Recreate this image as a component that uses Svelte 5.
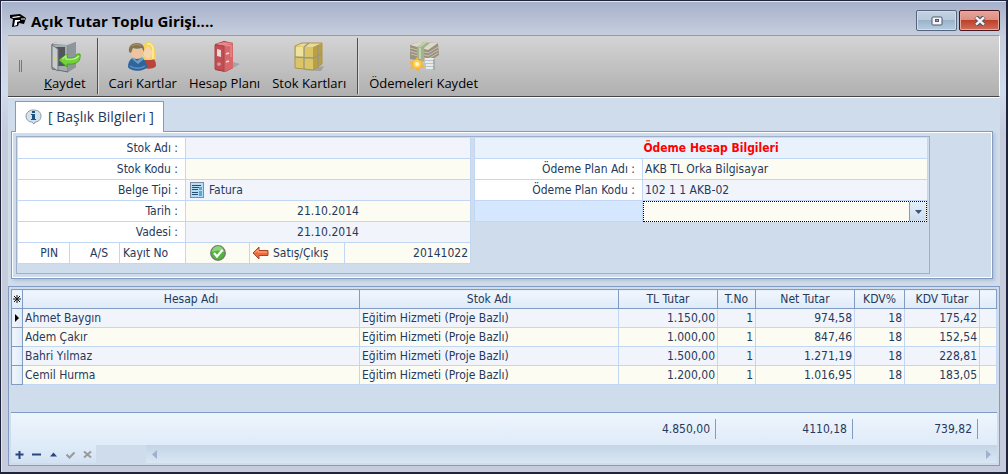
<script>
/**
 * Açık Tutar Toplu Girişi — bulk open amount entry window.
 */
const tools = [
	{ id: 'save', label: 'Kaydet', accessKey: true, divider: true },
	{ id: 'people', label: 'Cari Kartlar' },
	{ id: 'binder', label: 'Hesap Planı' },
	{ id: 'box', label: 'Stok Kartları', divider: true },
	{ id: 'money', label: 'Ödemeleri Kaydet' },
];

const columns = [
	{ key: 'account', label: 'Hesap Adı' },
	{ key: 'stock', label: 'Stok Adı' },
	{ key: 'amount', label: 'TL Tutar', numeric: true },
	{ key: 'no', label: 'T.No', numeric: true },
	{ key: 'net', label: 'Net Tutar', numeric: true },
	{ key: 'rate', label: 'KDV%', numeric: true },
	{ key: 'vat', label: 'KDV Tutar', numeric: true },
];

const stock = 'Eğitim Hizmeti (Proje Bazlı)';
const rows = [
	{ account: 'Ahmet Baygın', stock, amount: '1.150,00', no: '1', net: '974,58', rate: '18', vat: '175,42' },
	{ account: 'Adem Çakır', stock, amount: '1.000,00', no: '1', net: '847,46', rate: '18', vat: '152,54' },
	{ account: 'Bahri Yılmaz', stock, amount: '1.500,00', no: '1', net: '1.271,19', rate: '18', vat: '228,81' },
	{ account: 'Cemil Hurma', stock, amount: '1.200,00', no: '1', net: '1.016,95', rate: '18', vat: '183,05' },
];

let selected = $state(0);
let form = $state({
	stockName: '',
	stockCode: '',
	docType: 'Fatura',
	date: '21.10.2014',
	due: '21.10.2014',
	direction: 'Satış/Çıkış',
	recordNo: '20141022',
	planName: 'AKB TL Orka Bilgisayar',
	planCode: '102 1 1 AKB-02',
	extra: '',
});
</script>

<div class="window">
	<header class="titlebar">
		<svg class="app-icon" width="16" height="14" viewBox="0 0 16 14" aria-hidden="true">
			<path d="M0 1l10-1 6 4-2 6-5-1-1 3-6 1 1-8-3-1z" fill="#000" />
			<path d="M2 3l7-1 2 1-8 1zM5 6l5 0v1l-3 1v3l-3 1z" fill="#fff" />
			<path d="M11 5l4 0" stroke="#fff" />
		</svg>
		<h1>Açık Tutar Toplu Girişi....</h1>
		<button class="caption" aria-label="Ekranı kapla">
			<svg width="12" height="10" viewBox="0 0 12 10">
				<rect x="1" y="1" width="10" height="8" rx="1" fill="#f4f6fa" stroke="#4d566b" />
				<rect x="4.5" y="3.5" width="3" height="2" fill="#8fa6c0" stroke="#4d566b" />
			</svg>
		</button>
		<button class="caption caption--close" aria-label="Kapat">
			<svg width="12" height="10" viewBox="0 0 12 10">
				<path d="M2 1l8 8M10 1l-8 8" stroke="#4c4d60" stroke-width="4.4" />
				<path d="M2 1.400l8 7.200M10 1.400L2 8.600" stroke="#f4f4f6" stroke-width="2.600" />
			</svg>
		</button>
	</header>

	<div class="toolbar" role="toolbar" aria-label="Araçlar">
		<span class="grip"></span>
		{#each tools as tool (tool.id)}
			<button class="tool">
				<svg width="32" height="32" viewBox="0 0 32 32" aria-hidden="true">
					{#if tool.id === 'save'}
						<path d="M3 3l5-2h19v25l-8 5-16-3z" fill="#80878c" />
						<path d="M3 3h16v28l-16-3z" fill="#a5acb0" stroke="#666d71" />
						<path d="M3 3l5-2h19l-8 3z" fill="#cbd0d3" />
						<path d="M19 4l8-3v25l-8 5z" fill="#8f969b" />
						<path d="M7 6h9v19H7z" fill="#50565a" />
						<path d="M3 4l6 4v22l-6-4z" fill="#c6cbce" stroke="#70777b" />
						<circle cx="6" cy="18" r="1.3" fill="#f2d14a" />
						<path d="M10 19l8-6v4c6 1 9-1 10-4h3c1 7-3 11-13 10v3z" fill="#73d33b" stroke="#46a51e" />
						<path d="M13 18l4-3v3c6 1 10 0 13-3" fill="none" stroke="#b5f08b" stroke-width="1.4" />
					{:else if tool.id === 'people'}
						<path d="M16 26c0-7 2-10 6-10 5 0 7 4 7 9-2 3-9 4-13 1z" fill="#b8443c" />
						<path d="M15 9c0-5 3-8 6-8 5 0 7 4 7 9l1 8-5 1h-8z" fill="#f3d45c" />
						<path d="M17 9l4-4 4 5c0 4-1 7-4 8l-4-3z" fill="#f7d4b0" />
						<path d="M20 3c4-1 6 2 6 6v9" stroke="#ffee9f" stroke-width="1.500" fill="none" />
						<path d="M1 26c0-7 4-10 9-10 6 0 10 4 10 10-3 5-16 5-19 0z" fill="#2f659b" />
						<path d="M6 16l4 4 5-4 2 2-6 5-6-5z" fill="#6f9fc9" />
						<path d="M4 8h12c0 7-2 10-6 10S4 15 4 8z" fill="#edc49e" />
						<path d="M2 11C1 5 5 2 10 2c5 0 8 3 7 9l-2-4c-4 1-7 1-9 0l-2 5z" fill="#8a7350" />
						<path d="M5 5c3-2 7-2 9 0" stroke="#af9871" fill="none" />
						<path d="M3 25c4 3 11 3 15 0" stroke="#5c92c2" stroke-width="1.500" fill="none" />
					{:else if tool.id === 'binder'}
						<path d="M17 31l14-8-7-2z" fill="#6b6b6b" opacity=".35" />
						<path d="M6 3l9-3 9 2v25l-8 4-10-2z" fill="#a92e35" />
						<path d="M14 5l10-3v25l-9 4z" fill="#d8676a" />
						<path d="M6 3l9-2 9 1-9 3z" fill="#e7898b" />
						<path d="M6 4l9 1v25l-9-2z" fill="#c14e52" stroke="#a9444a" />
						<path d="M8 8l4 1v7l-4-1z" fill="#f0d6d0" />
						<circle cx="10" cy="23" r="1.600" fill="#f1dddd" />
						<circle cx="10" cy="23" r=".7" fill="#8c2228" />
						<path d="M17 13l3-1M17 21l3-1" stroke="#f4dada" stroke-width="1.6" />
						<path d="M17 5l5-1v12" stroke="#e89a9a" fill="none" />
					{:else if tool.id === 'box'}
						<path d="M10 29l18 1 3-5z" fill="#555" opacity=".3" />
						<path d="M2 5l7-3h20v21l-9 6-18-2z" fill="#b19836" />
						<path d="M2 5h18v24L2 27z" fill="#dac666" />
						<path d="M20 6l9-4v21l-9 6z" fill="#b9a042" />
						<path d="M2 5l7-3h20l-9 4z" fill="#e9dc99" />
						<path d="M3 6h8v10H3z" fill="#efe29a" />
						<path d="M11 6v22M2 16l18 1 9-4M16 2l-5 4M25 4v22" stroke="#9a9585" stroke-width="1.300" fill="none" />
						<path d="M2 5l7-3h20v21l-9 6-18-2z" fill="none" stroke="#a9964c" />
					{:else}
						<path d="M2 4l8-3 20 1 1 12-11 7-18-3z" fill="#9a917f" />
						<path d="M2 4l8-3 20 1-10 7z" fill="#ddd8cb" />
						<path d="M2 7l18 5 10-6M2 10l18 5 10-6M3 13l17 5 10-6" stroke="#c9c1b0" fill="none" />
						<path d="M9 6l7-5 6 1-6 5v13l-7-2z" fill="#9fb48d" />
						<path d="M11 6l7-5M12 7v11" stroke="#c3d2b1" stroke-width="2" fill="none" />
						<path d="M16 17h11v12c-3 2-8 2-11 0z" fill="#bec4c4" />
						<path d="M17 18h9M17 21h8M18 24h8M18 27h7" stroke="#f7f9f9" stroke-width="1.6" />
						<path d="M26 18v11" stroke="#8d9496" />
						<path d="M9 16l2 4 4-1-1 4 3 3-5 1-2 4-3-4-5 1 2-4-3-3 5-1z" fill="#fbb333" />
						<circle cx="9" cy="23" r="4" fill="#ffd14e" />
						<circle cx="9" cy="23" r="2" fill="#fffbd0" />
					{/if}
				</svg>
				<span>
					{#if tool.accessKey}<u>{tool.label[0]}</u>{tool.label.slice(1)}{:else}{tool.label}{/if}
				</span>
			</button>
			{#if tool.divider}
				<span class="divider"></span>
			{/if}
		{/each}
	</div>

	<main>
		<div class="tabs" role="tablist">
			<button class="tab" role="tab" aria-selected="true">
				<svg width="17" height="16" viewBox="0 0 17 16" aria-hidden="true">
					<path d="M8 1c5 0 8 2 8 6s-3 6-6 6l-1 2-2-2c-4 0-6-3-6-6s3-6 7-6z" fill="#d5e2ec" stroke="#8798a6" />
					<path d="M7 2h3v2H7zM6 5h4v5h1v1H6v-1h1V6H6z" fill="#1c5383" />
				</svg>
				<span>[ Başlık Bilgileri ]</span>
			</button>
		</div>

		<section class="panel">
			<div class="sheet">
				<div class="fields">
					<label class="name" for="stock-name">Stok Adı :</label>
					<div class="value"><input id="stock-name" bind:value={form.stockName} /></div>
					<label class="name" for="stock-code">Stok Kodu :</label>
					<div class="value value--alt"><input id="stock-code" bind:value={form.stockCode} /></div>
					<label class="name" for="doc-type">Belge Tipi :</label>
					<div class="value value--icon">
						<svg width="14" height="16" viewBox="0 0 14 16" aria-hidden="true">
							<rect x=".5" y=".5" width="13" height="15" fill="#b5dcf5" stroke="#7e8d99" />
							<path d="M2 3.500h9M2 5.500h7M2 7.500h6M2 10.500h6M2 12.500h6" stroke="#254f72" />
							<path d="M9 5h3v3H9zM9 9h3v5H9z" fill="#5ca5d6" />
						</svg>
						<input id="doc-type" bind:value={form.docType} />
					</div>
					<label class="name" for="date">Tarih :</label>
					<div class="value value--alt"><input id="date" class="center" bind:value={form.date} /></div>
					<label class="name" for="due">Vadesi :</label>
					<div class="value"><input id="due" class="center" bind:value={form.due} /></div>

					<div class="record-names">
						<span>PIN</span>
						<span>A/S</span>
						<label for="record-no">Kayıt No</label>
					</div>
					<div class="record-values">
						<div class="state">
							<svg width="16" height="16" viewBox="0 0 16 16" role="img" aria-label="Onaylı">
								<circle cx="8" cy="8" r="7.200" fill="#52b53c" stroke="#6e7d6b" stroke-width="1.400" />
								<path d="M2 7a6 6 0 0112 0c-4-2-8-2-12 0z" fill="#8bd679" />
								<path d="M4 8l3 3.500L12.500 5" stroke="#fff" stroke-width="2.200" fill="none" />
							</svg>
						</div>
						<div class="value value--direction">
							<svg width="17" height="14" viewBox="0 0 17 14" aria-hidden="true">
								<path d="M1 7l6-6v3.500h9v5H7V13z" fill="#ef6a3a" stroke="#a8452b" />
								<path d="M3 6.500l3-3V6h9" stroke="#ffb38f" fill="none" />
							</svg>
							<input aria-label="Satış/Çıkış" bind:value={form.direction} />
						</div>
						<div class="value value--alt"><input id="record-no" class="right" bind:value={form.recordNo} /></div>
					</div>
				</div>

				<div class="fields">
					<h2>Ödeme Hesap Bilgileri</h2>
					<label class="name" for="plan-name">Ödeme Plan Adı :</label>
					<div class="value value--alt"><input id="plan-name" bind:value={form.planName} /></div>
					<label class="name" for="plan-code">Ödeme Plan Kodu :</label>
					<div class="value"><input id="plan-code" bind:value={form.planCode} /></div>
					<label class="name name--active" for="extra" aria-label="Ek hesap"></label>
					<div class="combo">
						<select id="extra" bind:value={form.extra}>
							<option value=""></option>
						</select>
						<span class="combo-arrow">
							<svg width="7" height="4" viewBox="0 0 7 4"><path d="M0 0h7L3.500 4z" fill="#3f5373" /></svg>
						</span>
					</div>
				</div>
			</div>
		</section>

		<section class="grid">
			<table>
				<colgroup>
					<col class="col-mark" />
					{#each columns as column (column.key)}
						<col class="col-{column.key}" />
					{/each}
					<col class="col-rest" />
				</colgroup>
				<thead>
					<tr>
						<th aria-label="Satır">
							<svg width="8" height="8" viewBox="0 0 8 8">
								<path d="M4 0v8M0 4h8M1 1l6 6M7 1L1 7" stroke="#111" />
							</svg>
						</th>
						{#each columns as column (column.key)}
							<th>{column.label}</th>
						{/each}
						<th></th>
					</tr>
				</thead>
				<tbody>
					{#each rows as row, i (row.account)}
						<tr onclick={() => (selected = i)}>
							<td class="mark">
								{#if selected === i}
									<svg width="4" height="8" viewBox="0 0 4 8"><path d="M0 0l4 4-4 4z" /></svg>
								{/if}
							</td>
							{#each columns as column (column.key)}
								<td class:numeric={column.numeric}>{row[column.key]}</td>
							{/each}
							<td></td>
						</tr>
					{/each}
				</tbody>
			</table>

			<div class="totals">
				<output class="total-amount">4.850,00</output>
				<output class="total-net">4110,18</output>
				<output class="total-vat">739,82</output>
			</div>

			<footer class="navigator">
				<div class="nav-buttons">
					<button aria-label="Ekle"><svg width="9" height="9" viewBox="0 0 9 9"><path d="M4.500 1v8M.5 4.500h8" stroke="#27467f" stroke-width="2" /></svg></button>
					<button aria-label="Sil"><svg width="9" height="9" viewBox="0 0 9 9"><path d="M0 4.500h9" stroke="#27467f" stroke-width="2" /></svg></button>
					<button aria-label="Düzenle"><svg width="9" height="9" viewBox="0 0 9 9"><path d="M1 6.500l3.500-4 3.500 4z" fill="#27467f" /></svg></button>
					<button aria-label="Onayla" disabled><svg width="9" height="9" viewBox="0 0 9 9"><path d="M.5 4.500l3 3 5-5" stroke="#999" stroke-width="2" fill="none" /></svg></button>
					<button aria-label="Vazgeç" disabled><svg width="9" height="9" viewBox="0 0 9 9"><path d="M1 1.500l7 6M8 1.500l-7 6" stroke="#999" stroke-width="2" /></svg></button>
				</div>
				<div class="scrollbar">
					<button aria-label="Sola kaydır"><svg width="5" height="9" viewBox="0 0 5 9"><path d="M5 0v9L0 4.500z" fill="#9fb1cb" /></svg></button>
					<button aria-label="Sağa kaydır"><svg width="5" height="9" viewBox="0 0 5 9"><path d="M0 0v9l5-4.500z" fill="#9fb1cb" /></svg></button>
				</div>
			</footer>
		</section>
	</main>
</div>

<style>
	:global(body) {
		background: #c6ccdb;
	}

	.window {
		--line: #829bc0;
		--soft-line: #c1d7f3;
		--base: #cfdcec;
		--cell: #f1f5fb;
		--cell-alt: #fcfcf3;
		--ink: #26395c;
		border: 1px solid #20243a;
		border-width: 1px 2px 2px 1px;
		padding: 0 6px 6px 7px;
		background: linear-gradient(#a5b0ca, #c6cedd 34px, #d0dcec 90px, #c6ccdb 130px);
		box-shadow: inset 1px 1px #dce5f2;
		font: 12px/18px 'DejaVu Sans Condensed', 'Noto Sans', sans-serif;
		color: var(--ink);
	}

	button,
	input,
	select {
		font: inherit;
		color: inherit;
		margin: 0;
		padding: 0;
		border: 0;
		background: none;
	}

	svg {
		display: block;
		flex-shrink: 0;
	}

	.titlebar {
		display: flex;
		align-items: center;
		gap: 2px;
		height: 34px;
		padding: 5px 0 0 2px;
		box-sizing: border-box;
	}

	h1 {
		flex: 1;
		margin: 0;
		padding-left: 3px;
		font: bold 15px/20px 'Open Sans', sans-serif;
		color: #000;
		white-space: nowrap;
	}

	.caption {
		display: grid;
		place-items: center;
		width: 41px;
		height: 21px;
		border: 1px solid #56657e;
		border-radius: 2px;
		background: linear-gradient(#c4d1e1, #b8c9db 50%, #9bb3ca 50%, #b6cde0);
		box-shadow: inset 0 0 0 1px #d2deeb;
	}

	.caption--close {
		border-color: #4b1522;
		background: linear-gradient(#e8a49a, #dc8c80 50%, #bd4029 50%, #d0705b);
		box-shadow: inset 0 0 0 1px #e5a99d;
	}

	.toolbar {
		display: flex;
		align-items: center;
		height: 60px;
		padding-left: 11px;
		border-top: 1px solid #979aa0;
		border-right: 1px solid #fff;
		border-bottom: 1px solid #444;
		background: linear-gradient(#d4d4d4, #b0b0b0);
		color: #000;
		font: 13px/18px 'Open Sans', sans-serif;
	}

	.grip {
		width: 1px;
		height: 12px;
		margin-right: 16px;
		border: 1px solid #777;
		border-width: 0 1px;
	}

	.tool {
		display: flex;
		flex-direction: column;
		align-items: center;
		gap: 1px;
		padding: 0 6px;
		white-space: nowrap;
	}

	.divider {
		width: 1px;
		height: 56px;
		margin: 0 5px;
		background: #4e4e4e;
		box-shadow: 1px 0 #dadada;
	}

	main {
		background: var(--base);
		border-top: 1px solid #fff;
	}

	.tabs {
		display: flex;
		padding: 3px 7px 0;
	}

	.tab {
		display: flex;
		align-items: center;
		gap: 6px;
		height: 31px;
		padding: 0 9px;
		margin-bottom: -1px;
		border: 1px solid var(--line);
		border-bottom: 0;
		background: #fff;
		font: 14px/20px 'Open Sans', sans-serif;
		z-index: 1;
	}

	.panel {
		margin: 0 7px 7px 3px;
		border: 1px solid var(--line);
		padding: 4px;
		box-shadow: inset 0 0 0 1px #fff, 2px 2px 3px #b4c2d6;
	}

	.sheet {
		display: flex;
		gap: 3px;
		align-items: flex-start;
		margin-right: 58px;
		padding: 1px 1px 9px;
		border: 1px solid #9dafcb;
	}

	.fields {
		flex: 1 1 0;
		min-width: 0;
		display: grid;
		grid-template-columns: 168px 1fr;
		grid-auto-rows: 21px;
		border-right: 1px solid var(--soft-line);
	}

	.fields + .fields {
		border-left: 1px solid var(--soft-line);
	}

	.name {
		padding: 1px 7px 0 0;
		border-right: 1px solid var(--soft-line);
		border-bottom: 1px solid var(--soft-line);
		background: #fff;
		text-align: right;
	}

	.name--active {
		background: #d5e7fe;
	}

	h2 {
		grid-column: 1 / -1;
		margin: 0;
		padding: 1px 0 0 20px;
		border-bottom: 1px solid var(--soft-line);
		background: #e9f2fc;
		font: inherit;
		font-weight: bold;
		color: #f00;
		text-align: center;
	}

	.value {
		display: flex;
		align-items: center;
		gap: 5px;
		min-width: 0;
		padding: 0 2px;
		border-bottom: 1px solid var(--soft-line);
		background: var(--cell);
	}

	.value--alt,
	.value--direction {
		background: var(--cell-alt);
	}

	.value--icon {
		padding-left: 4px;
	}

	.value input {
		flex: 1;
		width: 0;
		min-width: 0;
	}

	.value .center {
		text-align: center;
	}

	.value .right {
		text-align: right;
	}

	.record-names {
		display: grid;
		grid-template-columns: 52px 50px 1fr;
		background: #fff;
		border-right: 1px solid var(--soft-line);
		border-bottom: 1px solid var(--soft-line);
	}

	.record-names > * {
		padding: 1px 3px 0;
	}

	.record-names span {
		border-right: 1px solid var(--soft-line);
		padding-right: 11px;
		text-align: right;
	}

	.record-values {
		display: grid;
		grid-template-columns: 64px 95px 1fr;
	}

	.state {
		display: grid;
		place-items: center;
		border-right: 1px solid var(--soft-line);
		border-bottom: 1px solid var(--soft-line);
		background: var(--cell-alt);
	}

	.value--direction {
		gap: 4px;
		border-right: 1px solid var(--soft-line);
	}

	.combo {
		display: flex;
		border: 1px dotted #000;
		background: var(--cell-alt);
	}

	.combo select {
		flex: 1;
		appearance: none;
		outline: 0;
	}

	.combo-arrow {
		display: grid;
		place-items: center;
		width: 16px;
		border-left: 1px solid var(--line);
		background: linear-gradient(#e4eefa, #ccdcee);
		pointer-events: none;
	}

	.grid {
		border: 1px solid var(--line);
		padding: 2px;
	}

	table {
		width: 100%;
		table-layout: fixed;
		border-collapse: collapse;
	}

	.col-mark {
		width: 11px;
	}

	.col-stock {
		width: 259px;
	}

	.col-amount,
	.col-net {
		width: 99px;
	}

	.col-no {
		width: 38px;
	}

	.col-rate {
		width: 50px;
	}

	.col-vat {
		width: 75px;
	}

	.col-rest {
		width: 17px;
	}

	th,
	td {
		height: 18px;
		padding: 0 2px;
		border: 1px solid var(--soft-line);
		white-space: nowrap;
		overflow: hidden;
	}

	th {
		border-color: var(--line);
		background: linear-gradient(#f1f6fd, #deebf9);
		font-weight: normal;
		text-align: center;
	}

	th:first-child,
	td.mark {
		padding: 0 1px;
	}

	td {
		background: var(--cell);
	}

	tr:nth-child(even) td {
		background: var(--cell-alt);
	}

	tr td.mark {
		border-color: var(--line);
		background: linear-gradient(90deg, #f1f6fd, #deebf9);
	}

	.mark svg {
		margin-left: 2px;
	}

	.numeric {
		text-align: right;
	}

	.totals {
		display: flex;
		justify-content: flex-end;
		margin-top: 27px;
		padding: 6px 19px 6px 0;
		border-top: 1px solid var(--line);
		background: linear-gradient(#eef5fd, #dfebf9);
	}

	.totals output {
		box-sizing: border-box;
		padding-right: 5px;
		border-right: 1px solid var(--line);
		line-height: 20px;
		text-align: right;
	}

	.total-amount {
		width: 99px;
	}

	.total-net {
		width: 137px;
	}

	.total-vat {
		width: 125px;
	}

	.navigator {
		display: flex;
		height: 18px;
	}

	.nav-buttons {
		display: flex;
		width: 85px;
		margin-right: 50px;
		background: linear-gradient(#dfebf9, #d3e2f2);
	}

	.nav-buttons button {
		display: grid;
		place-items: center;
		width: 17px;
	}

	.scrollbar {
		flex: 1;
		display: flex;
		justify-content: space-between;
		padding: 0 6px;
		background: linear-gradient(#c5d5e6, #d9e6f4);
	}
</style>
